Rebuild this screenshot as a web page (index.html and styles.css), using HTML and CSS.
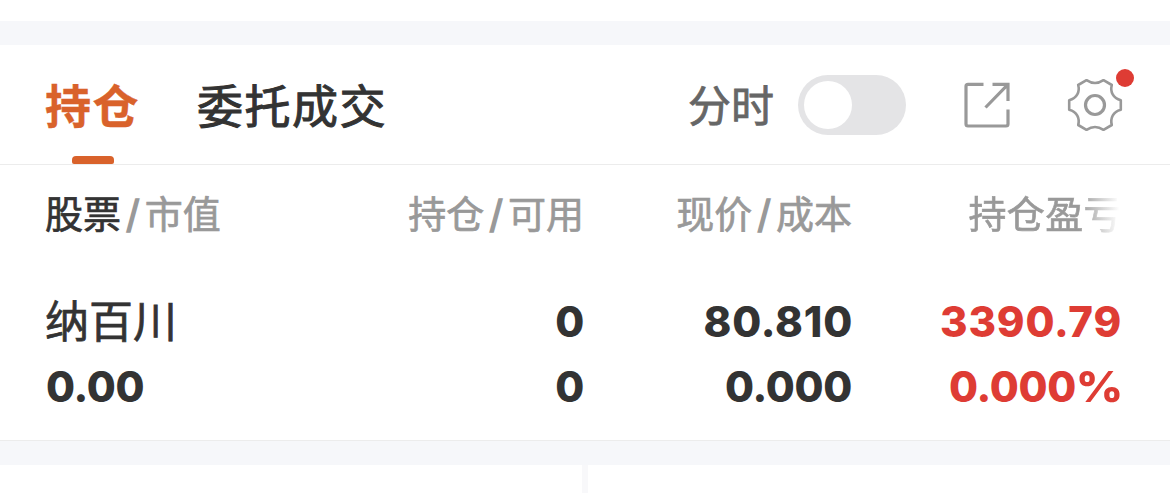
FILE: index.html
```html
<!DOCTYPE html>
<html lang="zh-CN">
<head>
    <meta charset="UTF-8">
    <meta name="viewport" content="width=device-width, initial-scale=1.0">
    <title>持仓</title>
    <link rel="stylesheet" href="styles.css">
</head>
<body>
    <div class="gap-top"></div>
    <div class="toolbar">
        <div class="tabs">
            <div class="tab active">持仓</div>
            <div class="tab">委托成交</div>
        </div>
        <div class="tools">
            <span class="switch-label">分时</span>
            <div class="switch"><div class="knob"></div></div>
            <svg class="icon-share" width="50" height="50" viewBox="0 0 50 50" fill="none" stroke="#999" stroke-width="3.2">
                <path d="M21.5 4.3H6a2 2 0 0 0-2 2V44a2 2 0 0 0 2 2h38a2 2 0 0 0 2-2V29.5"/>
                <path d="M30.5 4.3H46V21M46 4.3L23.5 27.5"/>
            </svg>
            <div class="settings">
                <svg width="58" height="58" viewBox="-29 -29 58 58" fill="none" stroke="#999" stroke-width="2.6" stroke-linejoin="round">
                    <path d="M-8.5-24.8Q0-19.2 8.5-24.8L16.8-20C15-13.2 18-6.8 25.8-4.8V4.8C18 6.8 15 13.2 16.8 20L8.5 24.8Q0 19.2-8.5 24.8L-16.8 20C-15 13.2-18 6.8-25.8 4.8V-4.8C-18-6.8-15-13.2-16.8-20Z"/>
                    <circle r="9.5" stroke-width="3.2"/>
                </svg>
                <span class="dot"></span>
            </div>
        </div>
    </div>

    <div class="holdings">
        <div class="row head">
            <div><b>股票</b><i>/</i>市值</div>
            <div>持仓<i>/</i>可用</div>
            <div>现价<i>/</i>成本</div>
            <div class="fade">持仓盈亏</div>
        </div>
        <div class="row">
            <div class="name">纳百川</div>
            <div>0</div>
            <div>80.810</div>
            <div class="up">3390.79</div>
        </div>
        <div class="row second">
            <div>0.00</div>
            <div>0</div>
            <div>0.000</div>
            <div class="up">0.000<span class="percent">%</span></div>
        </div>
    </div>

    <div class="gap"></div>
    <div class="cards">
        <div class="card"></div>
        <div class="card"></div>
    </div>
</body>
</html>
```
FILE: styles.css
```css
* {
    box-sizing: border-box;
}

body {
    margin: 0;
    height: 493px;
    overflow: hidden;
    background: #fff;
    color: #333;
    font-family: 'Inter', 'Noto Sans CJK SC', sans-serif;
    display: flex;
    flex-direction: column;
}

.gap-top {
    height: 24px;
    margin-top: 21px;
    background: #f6f7fa;
}

.toolbar {
    height: 120px;
    border-bottom: 1px solid #ececec;
    padding: 0 45px;
    display: flex;
    justify-content: space-between;
}

.tabs {
    display: flex;
    gap: 57px;
}

.tab {
    position: relative;
    font-size: 46px;
    line-height: 122px;
    height: 119px;
    letter-spacing: 1.5px;
    -webkit-text-stroke: 1px #333;
}

.tab.active {
    color: #d9622b;
    font-weight: bold;
    -webkit-text-stroke: 0.4px #d9622b;
}

.tab.active::after {
    content: '';
    position: absolute;
    left: 27px;
    bottom: 0;
    width: 42px;
    height: 8px;
    border-radius: 4px 4px 2px 2px;
    background: #d9622b;
}

.tools {
    display: flex;
    align-items: center;
}

.switch-label {
    font-size: 43px;
    line-height: 60px;
    padding-top: 3px;
    color: #666;
    -webkit-text-stroke: 0.8px #666;
}

.switch {
    width: 108px;
    height: 60px;
    margin-left: 24px;
    border-radius: 30px;
    background: #e4e4e6;
    padding: 6px;
}

.knob {
    width: 48px;
    height: 48px;
    border-radius: 50%;
    background: #fff;
}

.icon-share {
    margin-left: 56px;
}

.settings {
    position: relative;
    height: 58px;
    margin-left: 54px;
    margin-right: 1px;
}

.dot {
    position: absolute;
    top: -7px;
    right: -10px;
    width: 18px;
    height: 18px;
    border-radius: 50%;
    background: #de3c34;
}

.holdings {
    height: 276px;
    padding: 0 48px 0 45px;
    border-bottom: 1px solid #ececec;
}

.row {
    display: grid;
    grid-template-columns: 271px 269px 268px 269px;
    height: 64px;
    line-height: 64px;
    font-size: 42px;
    font-weight: 800;
    letter-spacing: 0.8px;
    margin-top: 27px;
}

.row div {
    text-align: right;
    white-space: nowrap;
}

.row div:first-child {
    text-align: left;
}

.row.second {
    margin-top: 1px;
    letter-spacing: -0.3px;
    grid-template-columns: 270px 269px 268px 269px;
}

.row.head {
    height: 98px;
    line-height: 98px;
    margin-top: 0;
    grid-template-columns: 270px 269px 268px 270px;
    font-size: 38px;
    font-weight: normal;
    letter-spacing: 0;
    color: #999;
    -webkit-text-stroke: 0.7px;
}

.head b {
    font-weight: normal;
    color: #333;
}

.head i {
    font-style: normal;
    padding: 0 5px;
    -webkit-text-stroke: 1.4px;
}

.head .fade {
    letter-spacing: 0.4px;
    background: linear-gradient(to right, #999 84%, #fff 99%);
    -webkit-background-clip: text;
    background-clip: text;
    color: transparent;
    -webkit-text-stroke: 0.7px transparent;
}

.row .name {
    font-size: 44px;
    font-weight: normal;
    letter-spacing: 0;
    line-height: 64px;
    -webkit-text-stroke: 0.7px;
}

.row.second div:first-child {
    padding-left: 1px;
}

.up {
    color: #de3c34;
}

.percent {
    display: inline-block;
    margin-left: 2px;
    transform: scaleX(1.1);
}

.gap {
    height: 24px;
    background: #f6f7fa;
}

.cards {
    flex: 1;
    display: flex;
    gap: 6px;
    background: #f8f8fa;
}

.card {
    flex: 1;
    background: #fff;
}
```
